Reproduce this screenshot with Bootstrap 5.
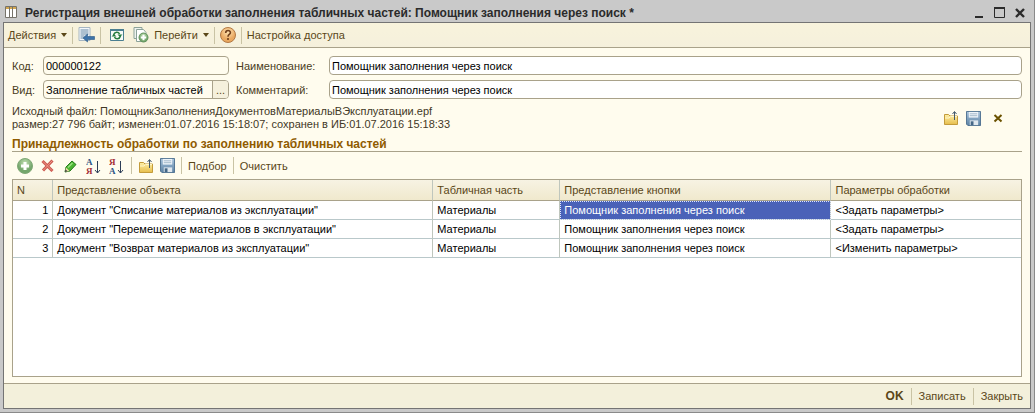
<!DOCTYPE html>
<html lang="ru">
<head>
<meta charset="utf-8">
<meta name="viewport" content="width=device-width, initial-scale=1">
<title>Регистрация внешней обработки</title>
<link href="https://cdn.jsdelivr.net/npm/bootstrap@5.3.0/dist/css/bootstrap.min.css" rel="stylesheet">
<style>
:root { --line: #a9a28a; --brown: #5a4718; --cream: #fffcee; --bar: #f5f0dc; }
body { font: 11px/14px "Liberation Sans", Arial, sans-serif; color: #2e2a1e; background: #c9c9c9; }
.window { min-height: 100vh; padding: 1px 3px 3px; border-right: 1px solid #8a8a8a; border-bottom: 1px solid #8a8a8a; }
.titlebar { height: 21px; padding: 1px 2px 0; color: #2b2b2b; }
.titlebar h1 { font-size: 12px; line-height: 14px; font-weight: 700; }
.client { background: var(--cream); border: 1px solid #747474; }
.toolbar { height: 25px; background: linear-gradient(#f8f3dc, #f5f0dc); border-bottom: 1px solid var(--line); padding-left: 4px; gap: 5px; }
.flat { border: 0; background: none; padding: 0; color: var(--brown); line-height: 16px; display: inline-flex; align-items: center; justify-content: center; white-space: nowrap; }
.flat:hover { text-decoration: underline; }
.flat svg, .titlebar svg { display: block; }
.caret { border: 3px solid transparent; border-top: 4px solid var(--brown); border-bottom: 0; margin-left: 5px; }
.sep { width: 1px; height: 17px; background: #c9c3a4; }
.content { padding: 8px 8px 6px; }
.fields { display: grid; grid-template-columns: 31px 186px 100px 1fr; row-gap: 5px; align-items: center; }
.fields label { color: #4a3d1c; }
.fields .lbl2 { padding-left: 7px; }
.box { height: 19px; border: 1px solid var(--line); border-radius: 4px; background: #fff; overflow: hidden; }
.box input { border: 0; padding: 0 2px; width: 100%; min-width: 0; background: none; color: #000; outline: 0; }
.box.locked { background: var(--cream); }
.dots { width: 16px; flex: none; align-self: stretch; background: var(--bar); border-left: 1px solid var(--line); }
.info { padding-top: 6px; color: #3f3826; line-height: 13px; }
.info-tools { gap: 7px; padding-right: 18px; }
.section-title { font-size: 12px; line-height: 14px; font-weight: 700; color: #8f5b00; border-bottom: 1px solid var(--line); margin: 6px 0 0; }
.gridbar { height: 27px; padding-left: 4px; gap: 6px; }
.icon-cell { width: 17px; }
.gridbox { border: 1px solid var(--line); background: #fff; }
.grid1c { width: 100%; table-layout: fixed; border-collapse: separate; border-spacing: 0; color: #000; }
.grid1c th { height: 21px; font-weight: 400; color: var(--brown); background: linear-gradient(#f7f3e3, #f0e9cd); border-bottom: 1px solid var(--line); }
.grid1c th, .grid1c td { padding: 0 4px; border-right: 1px solid #bfc6bd; white-space: nowrap; overflow: hidden; }
.grid1c td { height: 19px; border-bottom: 1px solid #b9c8ca; }
.grid1c th:last-child, .grid1c td:last-child { border-right: 0; }
.grid1c td:first-child { text-align: right; }
.grid1c td.picked { background: #4a62b8; color: #fff; outline: 1px dotted #dfe5ff; outline-offset: -1px; }
.footbar { height: 25px; background: #f3f0db; border-top: 1px solid var(--line); padding-right: 7px; gap: 7px; }
.ok { font-size: 12px; font-weight: 700; }
</style>
</head>
<body>
<svg width="0" height="0" class="position-absolute" aria-hidden="true">
  <defs>
    <linearGradient id="gFolder" x2="0" y2="1"><stop stop-color="#fff0a8"/><stop offset="1" stop-color="#e6bd4c"/></linearGradient>
    <linearGradient id="gDisk" x2="0" y2="1"><stop stop-color="#a9c4dc"/><stop offset="1" stop-color="#5b81a3"/></linearGradient>
    <radialGradient id="gGreen" cy=".3"><stop stop-color="#c3e0b4"/><stop offset="1" stop-color="#74a66c"/></radialGradient>
    <radialGradient id="gOrange" cy=".3"><stop stop-color="#ffe2b0"/><stop offset="1" stop-color="#e9a860"/></radialGradient>
  </defs>
  <symbol id="i-folder" viewBox="0 0 16 16">
    <path d="M1.500 4.500h4l1.500 1.500h7.500v8.500h-13z" fill="url(#gFolder)" stroke="#c39b3b"/>
    <path d="M2 8h4l1.500-1.500H14" fill="none" stroke="#fff6c8"/>
    <path d="M11.500 10V2M9.500 4l2-2.500 2 2.500" fill="none" stroke="#44596b"/>
  </symbol>
  <symbol id="i-disk" viewBox="0 0 16 16">
    <path d="M.5.5h15v15H2L.5 14z" fill="url(#gDisk)" stroke="#4d6f8f"/>
    <path d="M3 1h10v6H3z" fill="#eef4f9"/><path d="M4 3h8M4 5h8" stroke="#9fb5c8"/>
    <path d="M4 10h9v5H4z" fill="#dfe7ee"/><path d="M5 11h3v4H5z" fill="#456786"/>
  </symbol>
</svg>

<div class="window d-flex flex-column">
  <header class="titlebar d-flex align-items-start">
    <svg class="me-2 mt-1" width="12" height="12" viewBox="0 0 12 12"><path d="M.5.500h11v11H.500z" fill="#fff" stroke="#77736a"/><path d="M1 2h10" stroke="#d2a650" stroke-width="2"/><path d="M4.500 1v10M7.500 1v10" stroke="#77736a"/></svg>
    <h1 class="m-0 mt-1 flex-grow-1 text-nowrap overflow-hidden">Регистрация внешней обработки заполнения табличных частей: Помощник заполнения через поиск *</h1>
    <div class="d-flex gap-2 mt-1 pe-1">
      <button class="flat" type="button" aria-label="Свернуть"><svg width="12" height="14" viewBox="0 0 12 14"><path d="M2 11h8" stroke="#2b2b2b" stroke-width="2"/></svg></button>
      <button class="flat" type="button" aria-label="Развернуть"><svg width="12" height="14" viewBox="0 0 12 14"><path d="M1.500 1.500h10v10h-10z" fill="none" stroke="#2b2b2b"/><path d="M1 2h11" stroke="#2b2b2b" stroke-width="2"/></svg></button>
      <button class="flat" type="button" aria-label="Закрыть окно"><svg width="12" height="14" viewBox="0 0 12 14"><path d="M3 3l8 8M11 3l-8 8" stroke="#2b2b2b" stroke-width="2.400"/></svg></button>
    </div>
  </header>

  <main class="client flex-grow-1 d-flex flex-column">
    <nav class="toolbar d-flex align-items-center" aria-label="Команды формы">
      <button class="flat" type="button">Действия<span class="caret"></span></button>
      <span class="sep"></span>
      <button class="flat" type="button" aria-label="Записать"><svg width="17" height="16" viewBox="0 0 16 16"><path d="M.5.500h11v13H.500z" fill="#f4f8fb" stroke="#a6b6c2"/><path d="M2 3h8M2 5h8M2 7h8M2 9h4M2 11h3" stroke="#6488a5"/><path d="M4.500 11L9 7v2.500h7v3H9V15z" fill="#3c73aa" stroke="#285783" stroke-width=".6"/></svg></button>
      <span class="sep"></span>
      <button class="flat mx-1" type="button" aria-label="Обновить"><svg width="14" height="14" viewBox="0 0 14 14"><path d="M.5 1.500h13v11H.500z" fill="#f7fbf7" stroke="#4b7f91"/><path d="M0 2h14" stroke="#4b7f91" stroke-width="2"/><path d="M3.500 7c1-3.500 5-3.500 6-1M10.500 8c-1 3.500-5 3.500-6 1" fill="none" stroke="#277c40" stroke-width="1.500"/><path d="M7.500 6.500h5L10 9zM1.500 8.500h5L4 6z" fill="#277c40"/></svg></button>
      <button class="flat" type="button" aria-label="Скопировать"><svg width="16" height="16" viewBox="0 0 16 16"><path d="M1 .500h8v11H1z" fill="#eef2ee" stroke="#8ca299"/><path d="M3.500 2.500h7l2.500 3v9H3.500z" fill="#fff" stroke="#8ca299"/><circle cx="10.500" cy="10.500" r="4.500" fill="url(#gGreen)" stroke="#62935c"/><path d="M7.800 10.500h5.400M10.500 7.800v5.400" stroke="#fff" stroke-width="2"/></svg></button>
      <button class="flat" type="button">Перейти<span class="caret"></span></button>
      <span class="sep"></span>
      <button class="flat" type="button" aria-label="Справка"><svg width="16" height="16" viewBox="0 0 16 16"><circle cx="8" cy="8" r="7.500" fill="url(#gOrange)" stroke="#b27945"/><path d="M5.700 6c0-3.300 4.800-3.100 4.700-.3C10.300 7.500 8 7.500 8 9.700M8 11v2" fill="none" stroke="#71401b" stroke-width="1.600"/></svg></button>
      <span class="sep"></span>
      <button class="flat" type="button">Настройка доступа</button>
    </nav>

    <section class="content flex-grow-1 d-flex flex-column">
      <div class="fields">
        <label for="code">Код:</label>
        <div class="box locked d-flex align-items-center"><input id="code" value="000000122" readonly></div>
        <label class="lbl2" for="name">Наименование:</label>
        <div class="box d-flex align-items-center"><input id="name" value="Помощник заполнения через поиск"></div>
        <label for="kind">Вид:</label>
        <div class="box locked d-flex align-items-center"><input id="kind" value="Заполнение табличных частей"><button class="flat dots" type="button" aria-label="Выбрать вид">...</button></div>
        <label class="lbl2" for="note">Комментарий:</label>
        <div class="box d-flex align-items-center"><input id="note" value="Помощник заполнения через поиск"></div>
      </div>

      <div class="info d-flex justify-content-between align-items-center">
        <div>Исходный файл: ПомощникЗаполненияДокументовМатериалыВЭксплуатации.epf<br>размер:27 796 байт; изменен:01.07.2016 15:18:07; сохранен в ИБ:01.07.2016 15:18:33</div>
        <div class="info-tools d-flex">
          <button class="flat" type="button" aria-label="Открыть файл"><svg width="16" height="16"><use href="#i-folder"/></svg></button>
          <button class="flat" type="button" aria-label="Сохранить файл"><svg width="15" height="15"><use href="#i-disk"/></svg></button>
          <button class="flat ms-1" type="button" aria-label="Удалить файл"><svg width="12" height="12" viewBox="0 0 12 12"><path d="M2.500 3l7 6.500M9.500 3l-7 6.500" stroke="#6b5200" stroke-width="2"/></svg></button>
        </div>
      </div>

      <h2 class="section-title">Принадлежность обработки по заполнению табличных частей</h2>

      <div class="gridbar d-flex align-items-center" role="toolbar" aria-label="Команды таблицы">
        <button class="flat icon-cell" type="button" aria-label="Добавить"><svg width="16" height="16" viewBox="0 0 16 16"><circle cx="8" cy="8" r="7.500" fill="url(#gGreen)" stroke="#7fa876"/><path d="M4 8h8M8 4v8" stroke="#fff" stroke-width="3"/></svg></button>
        <button class="flat icon-cell" type="button" aria-label="Удалить"><svg width="13" height="13" viewBox="0 0 13 13"><path d="M1.500 2l10 10M11.500 1.500L2 11.500" stroke="#cc5a50" stroke-width="3"/><path d="M2 2.500l9 9M11 2L2.500 11" stroke="#f0958a"/></svg></button>
        <button class="flat icon-cell" type="button" aria-label="Изменить"><svg width="13" height="14" viewBox="0 0 13 14"><path d="M1 13l1-5L8 2l4 3.500L6 12z" fill="#4cb532" stroke="#267a1c"/><path d="M1 13l1-4.500L5.500 12z" fill="#e9dba4"/><path d="M1 13l.5-2.500 2 1.700z" fill="#333"/><path d="M4 8.500L8.500 4" stroke="#9ce183" stroke-width="1.500"/></svg></button>
        <button class="flat icon-cell" type="button" aria-label="По возрастанию"><svg width="15" height="18" viewBox="0 0 15 18"><g font-family="Liberation Serif,serif" font-size="9" font-weight="700"><text x="0" y="8" fill="#2c5484">А</text><text x="0" y="17" fill="#a52c34">Я</text></g><path d="M11.500 4v12M9 13l2.500 3 2.500-3" fill="none" stroke="#2d3e57"/></svg></button>
        <button class="flat icon-cell" type="button" aria-label="По убыванию"><svg width="15" height="18" viewBox="0 0 15 18"><g font-family="Liberation Serif,serif" font-size="9" font-weight="700"><text x="0" y="8" fill="#a52c34">Я</text><text x="0" y="17" fill="#2c5484">А</text></g><path d="M11.500 4v12M9 13l2.500 3 2.500-3" fill="none" stroke="#2d3e57"/></svg></button>
        <span class="sep"></span>
        <button class="flat" type="button" aria-label="Загрузить"><svg width="16" height="16"><use href="#i-folder"/></svg></button>
        <button class="flat" type="button" aria-label="Сохранить"><svg width="15" height="15"><use href="#i-disk"/></svg></button>
        <span class="sep"></span>
        <button class="flat" type="button">Подбор</button>
        <span class="sep"></span>
        <button class="flat" type="button">Очистить</button>
      </div>

      <div class="gridbox flex-grow-1">
        <table class="grid1c">
          <colgroup><col style="width:4%"><col style="width:37.700%"><col style="width:12.600%"><col style="width:26.900%"><col></colgroup>
          <thead><tr><th>N</th><th>Представление объекта</th><th>Табличная часть</th><th>Представление кнопки</th><th>Параметры обработки</th></tr></thead>
          <tbody>
            <tr><td>1</td><td>Документ "Списание материалов из эксплуатации"</td><td>Материалы</td><td class="picked">Помощник заполнения через поиск</td><td>&lt;Задать параметры&gt;</td></tr>
            <tr><td>2</td><td>Документ "Перемещение материалов в эксплуатации"</td><td>Материалы</td><td>Помощник заполнения через поиск</td><td>&lt;Задать параметры&gt;</td></tr>
            <tr><td>3</td><td>Документ "Возврат материалов из эксплуатации"</td><td>Материалы</td><td>Помощник заполнения через поиск</td><td>&lt;Изменить параметры&gt;</td></tr>
          </tbody>
        </table>
      </div>
    </section>

    <footer class="footbar d-flex align-items-center justify-content-end">
      <button class="flat ok" type="button">OK</button>
      <span class="sep"></span>
      <button class="flat" type="button">Записать</button>
      <span class="sep"></span>
      <button class="flat" type="button">Закрыть</button>
    </footer>
  </main>
</div>
<script src="https://cdn.jsdelivr.net/npm/bootstrap@5.3.0/dist/js/bootstrap.bundle.min.js"></script>
</body>
</html>
